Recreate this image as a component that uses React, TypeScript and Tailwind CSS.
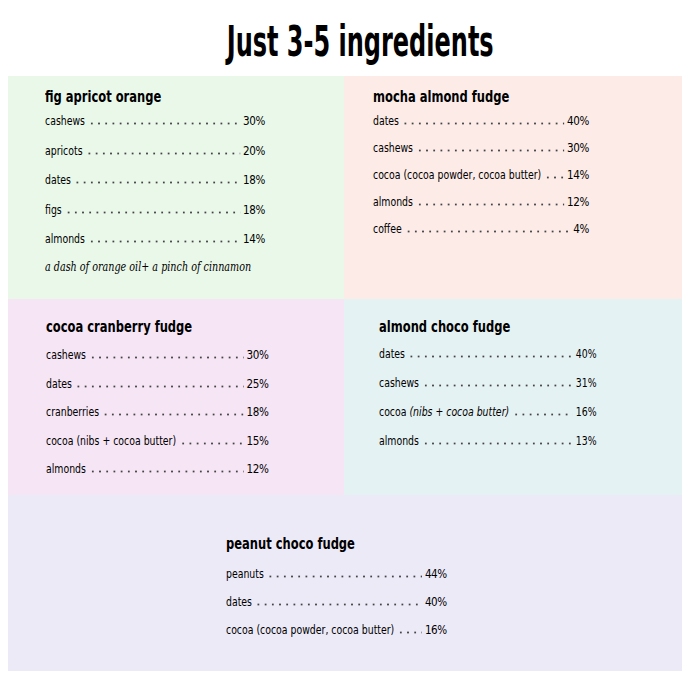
import React from "react";

type Item = { name: React.ReactNode; pct: string };

type Recipe = {
  title: string;
  items: Item[];
  note?: string;
  narrowPct?: boolean;
};

const narrow = { fontFamily: '"DejaVu Sans Condensed", "DejaVu Sans", sans-serif' };
const round = { fontFamily: '"DejaVu Sans", "Liberation Sans", sans-serif' };

function Row({ item, gap, narrowPct }: { item: Item; gap: string; narrowPct?: boolean }) {
  return (
    <div className={`flex items-baseline text-[13px] leading-[19px] text-black ${gap}`}>
      <span className="whitespace-nowrap" style={narrow}>
        {item.name}
      </span>
      <span className="mx-[4px] h-[3px] flex-1 bg-[radial-gradient(circle,#444_0.9px,transparent_1.3px)] bg-[length:9px_3px] bg-repeat-x" />
      <span className={narrowPct ? "text-[13px]" : "text-[13px] tracking-[-0.5px]"} style={narrowPct ? narrow : round}>
        {item.pct}
      </span>
    </div>
  );
}

function Card({ recipe, width, gap, headGap }: { recipe: Recipe; width: string; gap: string; headGap: string }) {
  return (
    <div className={`${width} origin-top-left scale-x-[0.8]`}>
      <h2 className={`text-[16px] font-bold leading-[20px] text-black ${headGap}`} style={narrow}>
        {recipe.title}
      </h2>
      <div className="flex flex-col">
        {recipe.items.map((item, i) => (
          <Row key={i} item={item} gap={i === 0 ? "" : gap} narrowPct={recipe.narrowPct} />
        ))}
      </div>
      {recipe.note && (
        <p className="mt-[10px] text-[12px] italic text-black" style={{ fontFamily: '"DejaVu Serif", serif' }}>
          {recipe.note}
        </p>
      )}
    </div>
  );
}

const fig: Recipe = {
  title: "fig apricot orange",
  items: [
    { name: "cashews", pct: "30%" },
    { name: "apricots", pct: "20%" },
    { name: "dates", pct: "18%" },
    { name: "figs", pct: "18%" },
    { name: "almonds", pct: "14%" },
  ],
  note: "a dash of orange oil+ a pinch of cinnamon",
};

const mocha: Recipe = {
  title: "mocha almond fudge",
  items: [
    { name: "dates", pct: "40%" },
    { name: "cashews", pct: "30%" },
    { name: "cocoa (cocoa powder, cocoa butter)", pct: "14%" },
    { name: "almonds", pct: "12%" },
    { name: "coffee", pct: "4%" },
  ],
};

const cranberry: Recipe = {
  title: "cocoa cranberry fudge",
  items: [
    { name: "cashews", pct: "30%" },
    { name: "dates", pct: "25%" },
    { name: "cranberries", pct: "18%" },
    { name: "cocoa (nibs + cocoa butter)", pct: "15%" },
    { name: "almonds", pct: "12%" },
  ],
};

const almond: Recipe = {
  title: "almond choco fudge",
  narrowPct: true,
  items: [
    { name: "dates", pct: "40%" },
    { name: "cashews", pct: "31%" },
    {
      name: (
        <>
          cocoa <i>(nibs + cocoa butter)</i>
        </>
      ),
      pct: "16%",
    },
    { name: "almonds", pct: "13%" },
  ],
};

const peanut: Recipe = {
  title: "peanut choco fudge",
  items: [
    { name: "peanuts", pct: "44%" },
    { name: "dates", pct: "40%" },
    { name: "cocoa (cocoa powder, cocoa butter)", pct: "16%" },
  ],
};

export default function App() {
  return (
    <div className="h-[700px] w-[690px] bg-white">
      <div className="flex h-[76px] items-center justify-center pl-[30px] pt-[8px]">
        <h1 className="scale-x-[0.635] whitespace-nowrap text-[42px] font-bold leading-none text-black" style={narrow}>
          Just 3-5 ingredients
        </h1>
      </div>
      <div className="mx-[8px] grid w-[674px] grid-cols-[336px_338px]">
        <div className="h-[223px] bg-[#eaf8e9] pl-[37px] pt-[11px]">
          <Card recipe={fig} width="w-[275px]" gap="mt-[10.5px]" headGap="mb-[4px]" />
        </div>
        <div className="h-[223px] bg-[#fcebe7] pl-[29px] pt-[11px]">
          <Card recipe={mocha} width="w-[270px]" gap="mt-[8px]" headGap="mb-[4px]" />
        </div>
        <div className="h-[196px] bg-[#f6e5f5] pl-[38px] pt-[18px]">
          <Card recipe={cranberry} width="w-[278px]" gap="mt-[9.5px]" headGap="mb-[8px]" />
        </div>
        <div className="h-[196px] bg-[#e5f2f3] pl-[35px] pt-[18px]">
          <Card recipe={almond} width="w-[272px]" gap="mt-[10px]" headGap="mb-[7px]" />
        </div>
        <div className="col-span-2 h-[176px] bg-[#edeaf8] pl-[218px] pt-[39px]">
          <Card recipe={peanut} width="w-[276px]" gap="mt-[9px]" headGap="mb-[10px]" />
        </div>
      </div>
    </div>
  );
}
